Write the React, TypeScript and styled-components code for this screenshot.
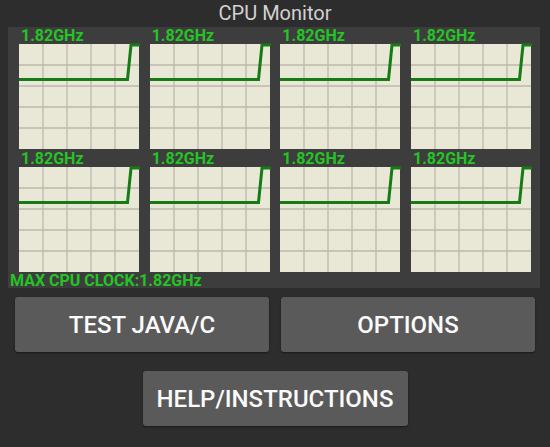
import * as React from 'react';
import styled, { createGlobalStyle } from 'styled-components';

const GlobalStyle = createGlobalStyle`
  html, body {
    margin: 0;
    padding: 0;
    background: #2d2d2d;
  }
  body {
    font-family: Roboto, 'Liberation Sans', sans-serif;
  }
`;

const Screen = styled.div`
  width: 550px;
  height: 447px;
  background: #2d2d2d;
  display: flex;
  flex-direction: column;
  overflow: hidden;
`;

const Title = styled.div`
  height: 27px;
  line-height: 27px;
  text-align: center;
  font-size: 20px;
  color: #d2d2d2;
`;

const Panel = styled.div`
  margin: 0 10px 0 8px;
  background: #3d3d3d;
  padding: 0 9px 0 11px;
  height: 261px;
  box-sizing: border-box;
`;

const GraphGrid = styled.div`
  display: grid;
  grid-template-columns: repeat(4, 120px);
  justify-content: space-between;
  row-gap: 1px;
`;

const Cell = styled.div`
  display: flex;
  flex-direction: column;
`;

const FreqLabel = styled.div`
  height: 17px;
  line-height: 18px;
  padding-left: 2px;
  font-size: 16px;
  font-weight: 700;
  color: #25c425;
`;

const Graph = styled.svg`
  display: block;
  width: 120px;
  height: 105px;
  background: #e9e7d6;
  overflow: visible;
`;

const MaxClock = styled.div`
  margin-left: -9px;
  height: 16px;
  line-height: 17px;
  font-size: 16px;
  font-weight: 700;
  color: #25c425;
`;

const ButtonArea = styled.div`
  display: flex;
  flex-direction: column;
  align-items: center;
  padding: 9px 15px 0 15px;
  gap: 19px;
`;

const ButtonRow = styled.div`
  display: flex;
  gap: 12px;
  width: 100%;
  justify-content: center;
`;

const Button = styled.button<{ $width?: number }>`
  flex: ${p => (p.$width ? `0 0 ${p.$width}px` : '1 1 0')};
  height: 55px;
  border: none;
  border-radius: 3px;
  background: #5a5a5a;
  box-shadow: 0 1px 2px rgba(0, 0, 0, 0.45);
  color: #fafafa;
  font-family: Roboto, 'Liberation Sans', sans-serif;
  font-size: 24px;
  font-weight: 500;
  padding: 0;
  cursor: pointer;
`;

const CpuGraph = () => {
  const cols = [24, 48, 72, 96];
  const rows = [21, 42, 63, 84];
  return (
    <Graph viewBox="0 0 120 105">
      {cols.map(x => (
        <line key={'c' + x} x1={x} y1={0} x2={x} y2={105} stroke="#bcb9ad" strokeWidth={1.3} />
      ))}
      {rows.map(y => (
        <line key={'r' + y} x1={0} y1={y} x2={120} y2={y} stroke="#bcb9ad" strokeWidth={1.3} />
      ))}
      <polyline
        points="0,35.5 108.5,35.5 112,1 121,1"
        fill="none"
        stroke="#157c15"
        strokeWidth={3}
        strokeLinejoin="miter"
      />
    </Graph>
  );
};

export default function App() {
  const cores = Array.from({ length: 8 }, () => '1.82GHz');
  return (
    <Screen>
      <GlobalStyle />
      <Title>CPU Monitor</Title>
      <Panel>
        <GraphGrid>
          {cores.map((freq, i) => (
            <Cell key={i}>
              <FreqLabel>{freq}</FreqLabel>
              <CpuGraph />
            </Cell>
          ))}
        </GraphGrid>
        <MaxClock>MAX CPU CLOCK:1.82GHz</MaxClock>
      </Panel>
      <ButtonArea>
        <ButtonRow>
          <Button>TEST JAVA/C</Button>
          <Button>OPTIONS</Button>
        </ButtonRow>
        <ButtonRow>
          <Button $width={265}>HELP/INSTRUCTIONS</Button>
        </ButtonRow>
      </ButtonArea>
    </Screen>
  );
}
